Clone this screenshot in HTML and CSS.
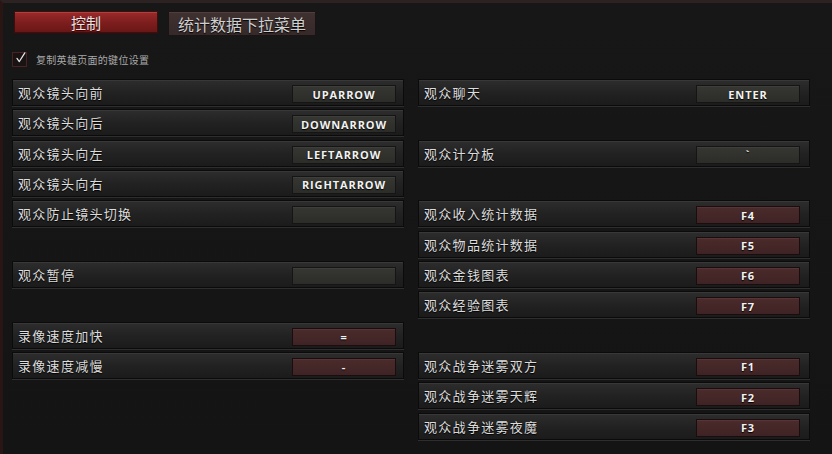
FILE: index.html
```html
<!DOCTYPE html>
<html lang="zh">
<head>
<meta charset="utf-8">
<link rel="stylesheet" href="styles.css">
</head>
<body>
<div class="page">
  <div class="tabs">
    <div class="tab tab-active">控制</div>
    <div class="tab tab-other">统计数据下拉菜单</div>
  </div>
  <label class="check-row">
    <span class="checkbox">
      <svg width="14" height="14" viewBox="0 0 14 14"><path d="M2.5 7.5 L5.5 11.5 L12.5 0.5" fill="none" stroke="#e8e8e8" stroke-width="1.6" stroke-linecap="round" stroke-linejoin="round"/></svg>
    </span>
    <span class="check-text">复制英雄页面的键位设置</span>
  </label>
  <div class="grid">
    <div class="col col-left">
      <div class="row"><span class="label">观众镜头向前</span><span class="key">UPARROW</span></div>
      <div class="row"><span class="label">观众镜头向后</span><span class="key">DOWNARROW</span></div>
      <div class="row"><span class="label">观众镜头向左</span><span class="key">LEFTARROW</span></div>
      <div class="row"><span class="label">观众镜头向右</span><span class="key">RIGHTARROW</span></div>
      <div class="row"><span class="label">观众防止镜头切换</span><span class="key"></span></div>
      <div class="slot"></div>
      <div class="row"><span class="label">观众暂停</span><span class="key"></span></div>
      <div class="slot"></div>
      <div class="row"><span class="label">录像速度加快</span><span class="key key-red">=</span></div>
      <div class="row"><span class="label">录像速度减慢</span><span class="key key-red">-</span></div>
    </div>
    <div class="col col-right">
      <div class="row"><span class="label">观众聊天</span><span class="key">ENTER</span></div>
      <div class="slot"></div>
      <div class="row"><span class="label">观众计分板</span><span class="key">`</span></div>
      <div class="slot"></div>
      <div class="row"><span class="label">观众收入统计数据</span><span class="key key-red">F4</span></div>
      <div class="row"><span class="label">观众物品统计数据</span><span class="key key-red">F5</span></div>
      <div class="row"><span class="label">观众金钱图表</span><span class="key key-red">F6</span></div>
      <div class="row"><span class="label">观众经验图表</span><span class="key key-red">F7</span></div>
      <div class="slot"></div>
      <div class="row"><span class="label">观众战争迷雾双方</span><span class="key key-red">F1</span></div>
      <div class="row"><span class="label">观众战争迷雾天辉</span><span class="key key-red">F2</span></div>
      <div class="row"><span class="label">观众战争迷雾夜魔</span><span class="key key-red">F3</span></div>
    </div>
  </div>
</div>
</body>
</html>
```
FILE: styles.css
```css
html, body {
  margin: 0;
  padding: 0;
  background: #151515;
  width: 832px;
  height: 454px;
  overflow: hidden;
  font-family: "Noto Sans CJK SC", "Noto Sans", sans-serif;
}
.page {
  box-sizing: border-box;
  width: 832px;
  height: 454px;
  border-top: 3px solid #2c2222;
  border-left: 3px solid #2a1515;
  background: linear-gradient(#171717, #141414);
  padding: 8px 0 0 9px;
}
.tabs {
  display: flex;
  align-items: flex-start;
  padding-left: 2px;
}
.tab {
  box-sizing: border-box;
  display: flex;
  align-items: center;
  justify-content: center;
  color: #e6e6e6;
  line-height: 1;
}
.tab-active {
  width: 144px;
  height: 22px;
  font-size: 15px;
  background: linear-gradient(#9a2a2a, #7c1d1d 55%, #6a1717);
  border: 1px solid #3d0e0e;
  box-shadow: inset 0 1px 0 #b04040, 0 1px 0 #2a1010;
  text-shadow: 0 1px 1px #300;
}
.tab-other {
  width: 148px;
  height: 25px;
  margin-left: 10px;
  font-size: 16px;
  color: #cfcfcf;
  background: linear-gradient(#413131, #352929);
  border: 1px solid #1c1414;
  box-shadow: inset 0 1px 0 #4e3e3e;
  text-shadow: 0 1px 1px #000;
}
.check-row {
  display: flex;
  align-items: center;
  margin-top: 16px;
}
.checkbox {
  box-sizing: border-box;
  width: 15px;
  height: 15px;
  border: 1px solid #4a2222;
  background: #1a1313;
  display: flex;
  align-items: center;
  justify-content: center;
}
.checkbox svg {
  display: block;
  margin-top: -3px;
  margin-left: 2px;
}
.check-text {
  margin-left: 9px;
  font-size: 10px;
  color: #a8a8a8;
  letter-spacing: 0.3px;
}
.grid {
  display: flex;
  gap: 14px;
  margin-top: 12px;
}
.col {
  display: flex;
  flex-direction: column;
  gap: 3.33px;
  width: 392px;
}
.slot {
  height: 27px;
}
.row {
  box-sizing: border-box;
  height: 27px;
  display: flex;
  align-items: center;
  justify-content: space-between;
  padding: 0 7px 0 5px;
  background: linear-gradient(#2d2d2d, #222 50%, #1b1b1b);
  border: 1px solid #0b0b0b;
  box-shadow: inset 0 1px 0 #383838, 0 1px 0 #2e2e2e;
}
.col-right .row {
  padding-right: 9px;
}
.label {
  font-size: 13px;
  letter-spacing: 1.3px;
  color: #dcdcdc;
  text-shadow: 0 1px 1px #000;
  line-height: 1;
}
.key {
  box-sizing: border-box;
  width: 104px;
  height: 18px;
  margin-top: 3px;
  display: flex;
  align-items: center;
  justify-content: center;
  font-family: "Open Sans", "DejaVu Sans", sans-serif;
  font-weight: 700;
  font-size: 11px;
  letter-spacing: 0.9px;
  color: #f2f2f2;
  text-shadow: 0 1px 1px #000;
  background: linear-gradient(#363732, #2c2d29);
  border: 1px solid #151515;
  box-shadow: inset 0 1px 0 #3e3f3a;
}
.key-red {
  background: linear-gradient(#4b2b2c, #3f2324);
  border-color: #1a0d0d;
  box-shadow: inset 0 1px 0 #573435;
}
```
